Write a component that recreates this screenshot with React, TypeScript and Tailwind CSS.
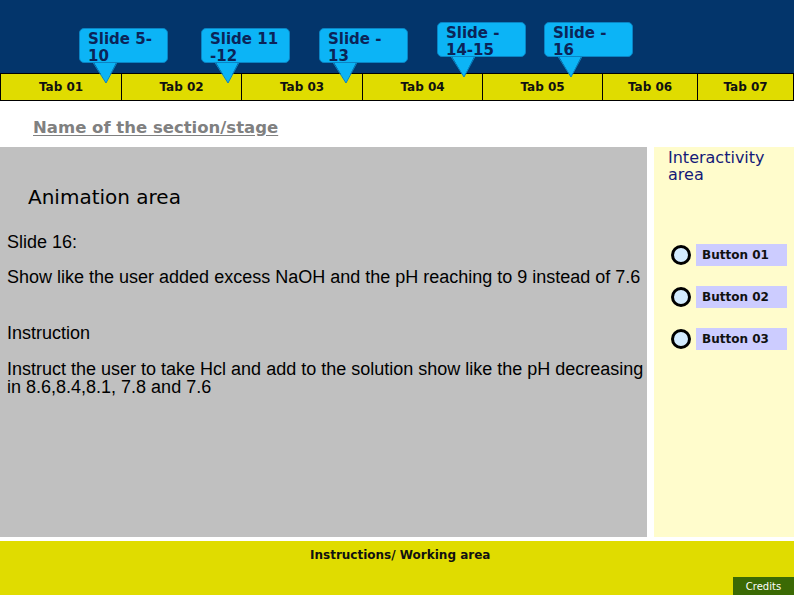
import type { ReactNode } from "react";

const tabs = [
  { label: "Tab 01", w: "w-[120px]" },
  { label: "Tab 02", w: "w-[120px]" },
  { label: "Tab 03", w: "w-[121px]" },
  { label: "Tab 04", w: "w-[120px]" },
  { label: "Tab 05", w: "w-[120px]" },
  { label: "Tab 06", w: "w-[95px]" },
  { label: "Tab 07", w: "flex-1" },
];

const callouts = [
  { left: 79, top: 28, lines: ["Slide 5-", "10"] },
  { left: 201, top: 28, lines: ["Slide 11", "-12"] },
  { left: 319, top: 28, lines: ["Slide -", "13"] },
  { left: 437, top: 22, lines: ["Slide -", "14-15"] },
  { left: 544, top: 22, lines: ["Slide -", "16"] },
];

const Callout = ({
  left,
  top,
  lines,
}: {
  left: number;
  top: number;
  lines: string[];
}) => (
  <div className="absolute w-[89px] h-[35px]" style={{ left, top }}>
    {/* tail pointing down at the tab */}
    <svg
      className="absolute left-0 top-[33px]"
      width="40"
      height="24"
      viewBox="0 0 40 24"
    >
      <polygon points="14,0 38,0 27,22" fill="#0cb4f6" />
      <polyline
        points="14,1.5 27,22 38,1.5"
        fill="none"
        stroke="#0a84c4"
        strokeWidth="1"
      />
    </svg>
    <div className="relative h-full rounded-[5px] border border-[#0a84c4] bg-[#0cb4f6] pl-[8px] pt-[2px] text-[15px] leading-[17px] font-bold text-[#0b2458] [font-family:'DejaVu_Sans',sans-serif]">
      {lines.map((l) => (
        <div key={l} className="whitespace-nowrap">
          {l}
        </div>
      ))}
    </div>
  </div>
);

const RadioButton = ({ label }: { label: string }) => (
  <div className="flex items-center h-[22px]">
    <div className="w-[20px] h-[20px] rounded-full border-[3px] border-black bg-[#d3ebff] ml-[17px]" />
    <div className="ml-[5px] w-[91px] h-[22px] bg-[#ccccff] flex items-center pl-[6px] text-[12px] font-bold text-[#111] [font-family:'DejaVu_Sans',sans-serif]">
      {label}
    </div>
  </div>
);

const Line = ({ top, children }: { top: string; children: ReactNode }) => (
  <div className={`${top} text-[18px] leading-[18px] text-black`}>{children}</div>
);

export default function App() {
  return (
    <div className="relative w-[794px] h-[595px] bg-white overflow-hidden flex flex-col [font-family:'DejaVu_Sans',sans-serif]">
      {/* top navy header */}
      <div className="h-[73px] bg-[#03356b]" />

      {/* tab bar */}
      <div className="h-[28px] flex bg-[#e0dc00] border border-black">
        {tabs.map((t, i) => (
          <div
            key={t.label}
            className={`${t.w} flex items-center justify-center text-[12px] font-bold text-[#111] ${
              i > 0 ? "border-l border-black" : ""
            }`}
          >
            {t.label}
          </div>
        ))}
      </div>

      {/* section name */}
      <div className="h-[46px] pl-[33px] pt-[15px]">
        <span className="text-[16.5px] leading-[20px] font-bold text-[#808080] underline underline-offset-2">
          Name of the section/stage
        </span>
      </div>

      {/* main area */}
      <div className="h-[390px] flex">
        <div className="w-[647px] bg-[#c0c0c0] pl-[7px]">
          <div className="pl-[21px] pt-[38px] text-[20px] leading-[24px] text-black">
            Animation area
          </div>
          <div className="[font-family:'Liberation_Sans',Arial,sans-serif]">
            <Line top="mt-[24px]">Slide 16:</Line>
            <Line top="mt-[17px]">
              Show like the user added excess NaOH and the pH reaching to 9 instead of 7.6
            </Line>
            <Line top="mt-[38px]">Instruction</Line>
            <Line top="mt-[18px]">
              Instruct the user to take Hcl and add to the solution show like the pH decreasing
              <br />
              in 8.6,8.4,8.1, 7.8 and 7.6
            </Line>
          </div>
        </div>
        <div className="ml-[7px] flex-1 bg-[#fffccc]">
          <div className="pl-[14px] pt-[2px] text-[16px] leading-[17px] text-[#141a78]">
            Interactivity
            <br />
            area
          </div>
          <div className="mt-[61px] flex flex-col gap-[20px]">
            <RadioButton label="Button 01" />
            <RadioButton label="Button 02" />
            <RadioButton label="Button 03" />
          </div>
        </div>
      </div>

      {/* bottom instructions area */}
      <div className="mt-[4px] flex-1 bg-[#e0dc00] relative">
        <div className="pl-[310px] pt-[6px] text-[12px] leading-[16px] font-bold text-[#111]">
          Instructions/ Working area
        </div>
        <div className="absolute right-0 bottom-0 w-[61px] h-[18px] bg-[#3b6a04] flex items-center justify-center text-[10px] text-white">
          Credits
        </div>
      </div>

      {/* slide callouts over header */}
      {callouts.map((c) => (
        <Callout key={c.lines.join("")} {...c} />
      ))}
    </div>
  );
}
